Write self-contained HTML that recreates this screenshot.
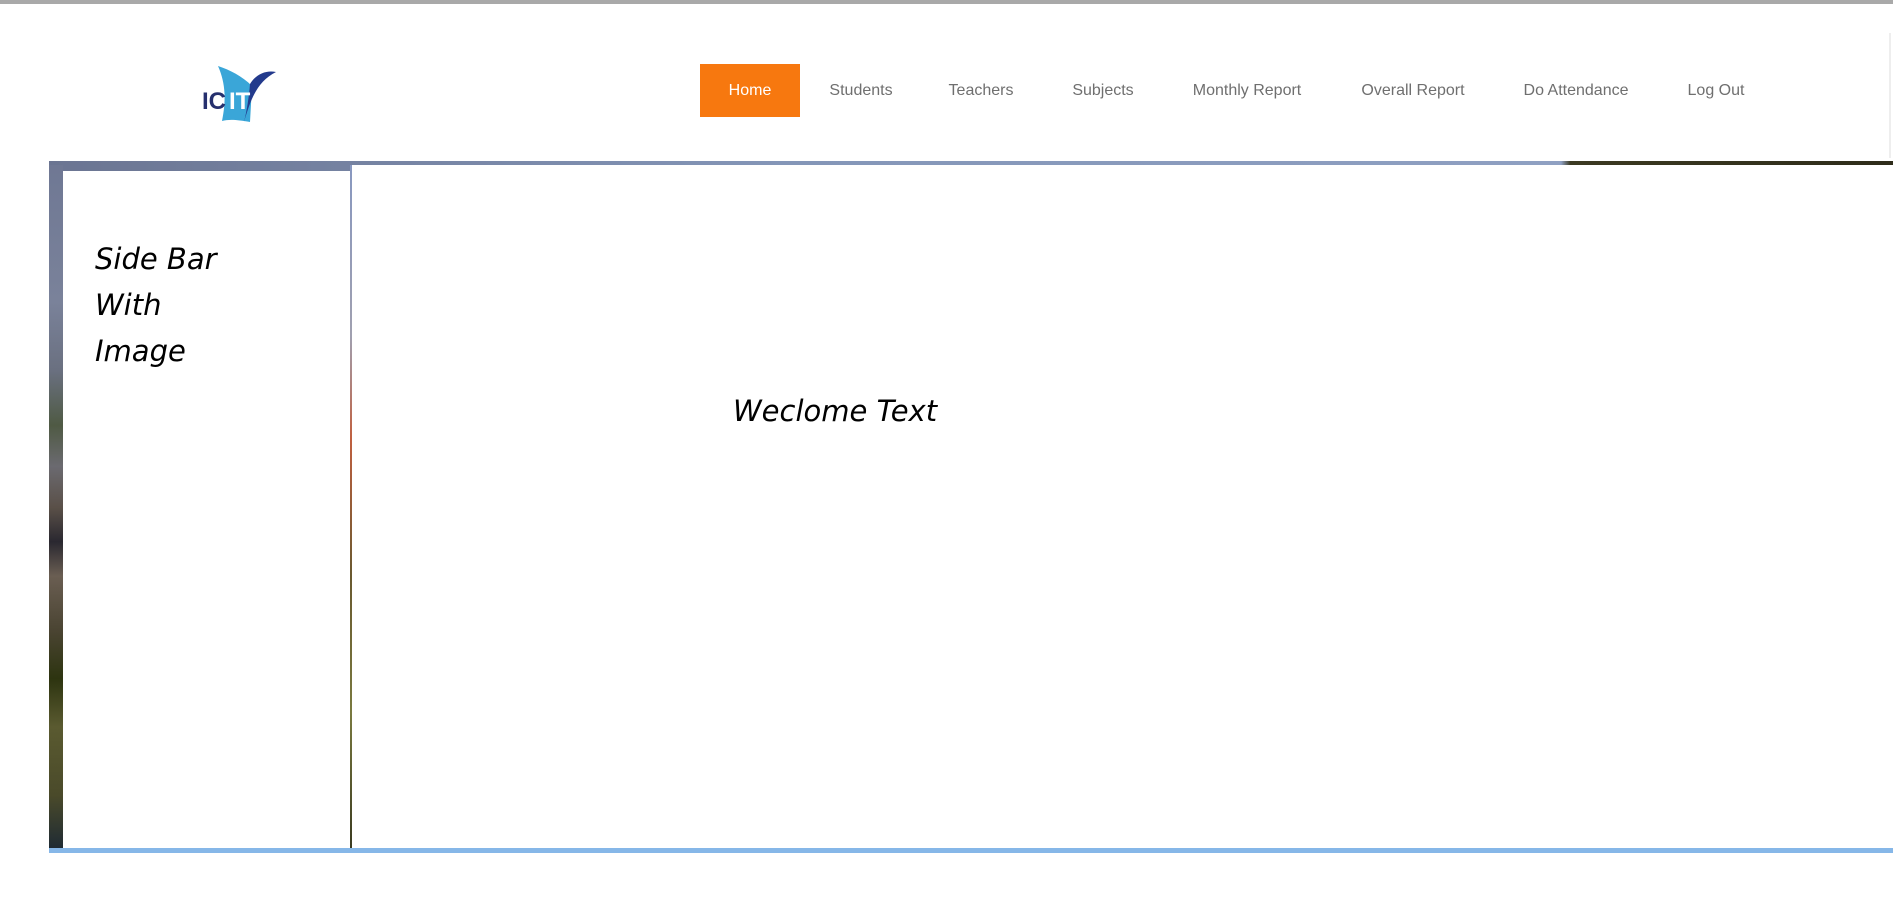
<!DOCTYPE html>
<html><head><meta charset="utf-8"><style>
html,body{margin:0;padding:0;background:#fff;}
body{width:1893px;height:923px;position:relative;overflow:hidden;font-family:"Liberation Sans",Arial,sans-serif;}
.topline{position:absolute;left:0;top:0;width:1893px;height:4px;background:#a9a9a9;}
.rline{position:absolute;left:1889px;top:33px;width:2px;height:125px;background:#eee;}
.nav a{position:absolute;top:64px;height:53px;line-height:53px;font-size:16px;color:#6f6f6f;text-decoration:none;transform:translateX(-50%);white-space:nowrap;}
.home{position:absolute;left:700px;top:64px;width:100px;height:53px;background:#f7780f;color:#fff;font-size:16px;line-height:53px;text-align:center;}
.frame{position:absolute;left:49px;top:161px;width:1844px;height:689px;background:linear-gradient(90deg,#6b7592 0%,#8496b8 40%,#8fa0c2 82%,#3c3a22 82.5%,#2e2c1a 100%);}
.lstrip{position:absolute;left:49px;top:165px;width:14px;height:685px;background:linear-gradient(180deg,#6f7894 0%,#7a829a 20%,#6a7080 30%,#4f5a44 38%,#6b6a70 44%,#5a5048 50%,#2a2830 55%,#6a5e52 60%,#4a4432 68%,#2d3410 75%,#5a5a30 82%,#4a4a2a 92%,#1e2a34 100%);}
.side{position:absolute;left:63px;top:171px;width:287px;height:679px;background:#fff;}
.content{position:absolute;left:352px;top:165px;width:1541px;height:685px;background:#fff;}
.vline{position:absolute;left:350px;top:165px;width:2px;height:685px;background:linear-gradient(180deg,#8898c0 0%,#a0a0b0 25%,#c06040 40%,#6a5a30 60%,#7a7a40 80%,#3a3a20 100%);}
.blue{position:absolute;left:49px;top:848px;width:1844px;height:5px;background:#86b7e8;}
.st{position:absolute;left:95px;top:236px;font-family:"DejaVu Sans","Liberation Sans",sans-serif;font-style:italic;font-size:29px;line-height:46px;color:#000;}
.wt{position:absolute;left:733px;top:394px;font-family:"DejaVu Sans","Liberation Sans",sans-serif;font-style:italic;font-size:29px;color:#000;white-space:nowrap;}
</style></head><body>
<div class="topline"></div>
<div class="rline"></div>
<svg style="position:absolute;left:200px;top:62px" width="80" height="64" viewBox="0 0 80 64">
<path d="M18 4 C30 8 42 14 52 24 L50 60 C38 58 30 57 22 59 C26 40 26 22 18 4Z" fill="#3aa6d8"/>
<path d="M44 60 C50 40 56 20 76 10 C66 8 56 12 50 22 C49 34 47 48 44 60Z" fill="#233a8c"/>
<text x="2" y="47" font-family="Liberation Sans" font-weight="bold" font-size="24" fill="#26306e">IC</text>
<text x="29" y="47" font-family="Liberation Sans" font-weight="bold" font-size="24" fill="#fff">IT</text>
</svg>
<div class="home">Home</div>
<div class="nav">
<a style="left:861px">Students</a>
<a style="left:981px">Teachers</a>
<a style="left:1103px">Subjects</a>
<a style="left:1247px">Monthly Report</a>
<a style="left:1413px">Overall Report</a>
<a style="left:1576px">Do Attendance</a>
<a style="left:1716px">Log Out</a>
</div>
<div class="frame"></div>
<div class="lstrip"></div>
<div class="side"></div>
<div class="content"></div>
<div class="vline"></div>
<div class="blue"></div>
<div class="st">Side Bar<br>With<br>Image</div>
<div class="wt">Weclome Text</div>
</body></html>
